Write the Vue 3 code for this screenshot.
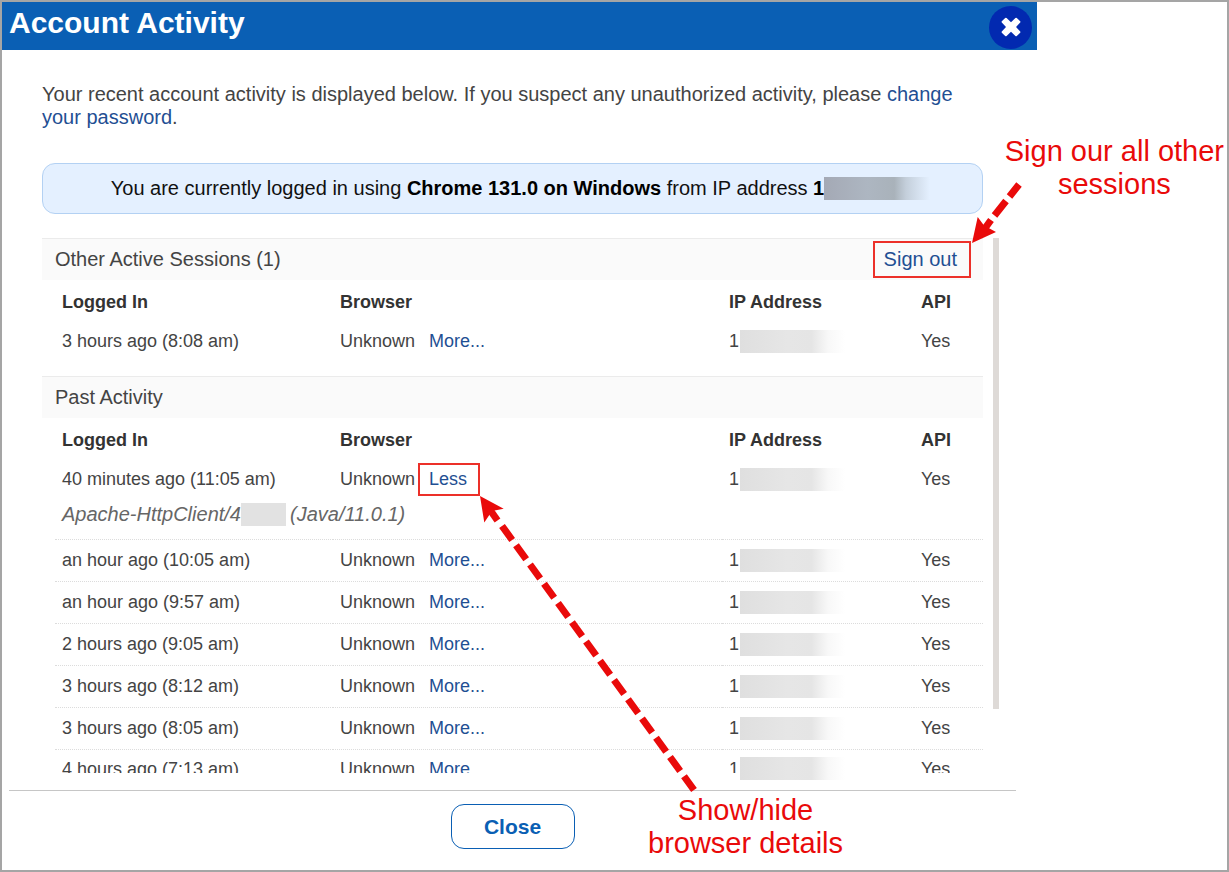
<script setup>
import { ref } from 'vue'

const active = ref([{ when: '3 hours ago (8:08 am)', open: false }])

const past = ref([
  { when: '40 minutes ago (11:05 am)', open: true },
  { when: 'an hour ago (10:05 am)', open: false },
  { when: 'an hour ago (9:57 am)', open: false },
  { when: '2 hours ago (9:05 am)', open: false },
  { when: '3 hours ago (8:12 am)', open: false },
  { when: '3 hours ago (8:05 am)', open: false },
  { when: '4 hours ago (7:13 am)', open: false, cut: true }
])
</script>

<template>
  <div class="frame">
    <main class="dialog">
      <header class="titlebar">
        <h1>Account Activity</h1>
        <button class="dismiss" type="button" aria-label="Close dialog">
          <svg viewBox="0 0 43 43" aria-hidden="true">
            <circle cx="21.5" cy="21.5" r="21.5" fill="#0229b0" />
            <path
              d="M12.8 15.3L16.2 12Q16.9 11.5 17.6 12L22 16.2L26.4 12Q27.1 11.5 27.8 12L31.2 15.3Q31.7 15.9 31.2 16.6L27 21L31.2 25.4Q31.7 26.1 31.2 26.7L27.8 30Q27.1 30.5 26.4 30L22 25.8L17.6 30Q16.9 30.5 16.2 30L12.8 26.7Q12.3 26.1 12.8 25.4L17 21L12.8 16.6Q12.3 15.9 12.8 15.3Z"
              fill="#fff"
            />
          </svg>
        </button>
      </header>

      <div class="body">
        <p class="intro">
          Your recent account activity is displayed below. If you suspect any unauthorized activity, please
          <a href="#">change your password</a>.
        </p>
        <div class="current">
          <span>You are currently logged in using <b>Chrome 131.0 on Windows</b> from IP address <b>1</b></span>
          <i class="mask mask-blue"></i>
        </div>

        <div class="scroller">
          <div class="lists">
            <section>
              <div class="section-head">
                <h2>Other Active Sessions (1)</h2>
                <button class="signout" type="button">Sign out</button>
              </div>
              <table>
                <thead>
                  <tr><th class="c1">Logged In</th><th>Browser</th><th class="c3">IP Address</th><th class="c4">API</th></tr>
                </thead>
                <tbody>
                  <tr v-for="s in active" :key="s.when">
                    <td><div class="cell">{{ s.when }}</div></td>
                    <td>
                      <div class="cell">
                        <span>Unknown</span>
                        <button class="toggle" type="button">More...</button>
                      </div>
                    </td>
                    <td><div class="cell ip"><span>1</span><i class="mask"></i></div></td>
                    <td><div class="cell">Yes</div></td>
                  </tr>
                </tbody>
              </table>
            </section>

            <section>
              <div class="section-head">
                <h2>Past Activity</h2>
              </div>
              <table>
                <thead>
                  <tr><th class="c1">Logged In</th><th>Browser</th><th class="c3">IP Address</th><th class="c4">API</th></tr>
                </thead>
                <tbody v-for="s in past" :key="s.when" :class="{ cut: s.cut }">
                  <tr>
                    <td><div class="cell"><span>{{ s.when }}</span></div></td>
                    <td>
                      <div class="cell">
                        <span>Unknown</span>
                        <button class="toggle" :class="{ marked: s.open }" type="button">
                          {{ s.open ? 'Less' : 'More...' }}
                        </button>
                      </div>
                    </td>
                    <td><div class="cell ip"><span>1</span><i class="mask"></i></div></td>
                    <td><div class="cell"><span>Yes</span></div></td>
                  </tr>
                  <tr v-if="s.open">
                    <td colspan="4">
                      <div class="agent">
                        <span>Apache-HttpClient/4</span><i class="mask mask-short"></i><span>(Java/11.0.1)</span>
                      </div>
                    </td>
                  </tr>
                </tbody>
              </table>
            </section>
          </div>
          <div class="track"><div class="thumb"></div></div>
        </div>
      </div>

      <footer>
        <button class="close" type="button">Close</button>
      </footer>
    </main>

    <p class="note note-signout">Sign our all other<br />sessions</p>
    <p class="note note-details">Show/hide<br />browser details</p>
    <svg class="arrows" width="1229" height="872" viewBox="0 0 1229 872" aria-hidden="true">
      <g fill="#e90a0a" stroke="none">
        <path d="M972 243L977.7 217L984 225.5L996 232Z" />
        <path d="M480 496L503.7 508.7L492 511L484.3 522.5Z" />
      </g>
      <g fill="none" stroke="#e90a0a" stroke-width="7">
        <path d="M1019 184.5L1009.5 196.5M1006 201L994.5 215.5M991 220L983 231" />
        <path d="M488 507L497.5 520.5" />
        <path d="M502 526L694 790" stroke-dasharray="17.3 6.5" />
      </g>
    </svg>
  </div>
</template>

<style>
body {
  background: #fff;
}
</style>

<style scoped>
* {
  box-sizing: border-box;
}
.frame {
  position: relative;
  min-height: 100vh;
  border: 2px solid #a5a5a5;
  background: #fff;
  color: #444;
  font-family: "Liberation Sans", Arial, sans-serif;
  font-size: 18px;
}
.dialog {
  margin-right: 190px;
}
h1, h2, p {
  margin: 0;
  font-weight: normal;
}
button {
  padding: 0;
  border: 0;
  background: none;
  font: inherit;
  color: #1f4f93;
  cursor: pointer;
}
a {
  color: #1f4f93;
  text-decoration: none;
}
.titlebar {
  display: flex;
  justify-content: space-between;
  height: 48px;
  padding: 0 5px 0 7px;
  background: #0a5fb4;
}
h1 {
  color: #fff;
  font-size: 30px;
  font-weight: bold;
  line-height: 42px;
}
.dismiss {
  width: 43px;
  height: 43px;
  margin-top: 4px;
}
.dismiss svg {
  display: block;
}
.body {
  padding: 33px 38px 0 40px;
}
.intro,
.current {
  margin-right: 16px;
}
.intro {
  font-size: 20px;
  line-height: 23px;
}
.current {
  display: flex;
  align-items: center;
  justify-content: center;
  height: 51px;
  margin-top: 34px;
  padding-left: 18px;
  border: 1px solid #b3d1f3;
  border-radius: 13px;
  background: #e4f0ff;
  color: #111;
  font-size: 20px;
}
.current b {
  color: #000;
}
.mask {
  flex: none;
  width: 105px;
  height: 23px;
  background: linear-gradient(90deg, #dfdfdf 0%, #e6e6e6 45%, #e5e5e5 68%, #f8f8f8 84%, #fff 100%);
}
.mask-blue {
  width: 108px;
  background: linear-gradient(90deg, #a4a9b5 0%, #adb6c1 40%, #a9b2ba 65%, #c4cfdb 76%, #e4f0ff 98%);
}
.mask-short {
  width: 45px;
  margin-right: 4px;
  background: #e2e2e2;
}
.scroller {
  display: flex;
  gap: 10px;
  height: 535px;
  margin-top: 24px;
}
.lists {
  flex: 1;
}
.track {
  width: 6px;
}
.thumb {
  height: 88%;
  background: #dedad7;
}
.section-head {
  display: flex;
  align-items: center;
  justify-content: space-between;
  height: 42px;
  padding: 0 12px 0 13px;
  border-top: 1px solid #ebebeb;
  background: #fafafa;
}
h2 {
  font-size: 20px;
}
.signout {
  height: 37px;
  padding: 0 12px 0 9px;
  border: 2px solid #ec3029;
  font-size: 20px;
}
section + section {
  margin-top: 18px;
}
table {
  width: calc(100% - 13px);
  margin-left: 13px;
  border-spacing: 0;
  table-layout: fixed;
}
th {
  height: 44px;
  padding: 0 0 0 7px;
  color: #333;
  text-align: left;
}
.c1 {
  width: 278px;
}
.c3 {
  width: 192px;
}
.c4 {
  width: 69px;
}
td {
  padding: 0 0 0 7px;
}
.cell {
  display: flex;
  align-items: center;
  gap: 14px;
  height: 34px;
}
.ip {
  gap: 1px;
}
tbody + tbody td {
  border-top: 1px dotted #dcdcdc;
}
tbody + tbody .cell {
  height: 41px;
}
.cut .cell {
  align-items: flex-start;
}
.cut span,
.cut .toggle {
  height: 23px;
  overflow: hidden;
  line-height: 38px;
}
.cut .mask {
  margin-top: 7px;
}
.toggle {
  position: relative;
}
.marked::after {
  content: "";
  position: absolute;
  inset: -6px -13px -6px -11px;
  border: 2px solid #ec3029;
}
.agent {
  display: flex;
  align-items: center;
  height: 43px;
  padding-bottom: 7px;
  color: #666;
  font-size: 20px;
  font-style: italic;
}
footer {
  display: flex;
  justify-content: center;
  margin: 17px 21px 0 7px;
  padding-top: 13px;
  border-top: 1px solid #c6c6c6;
}
.close {
  width: 124px;
  height: 45px;
  border: 1px solid #0a5fb4;
  border-radius: 13px;
  color: #0a5fb4;
  font-size: 21px;
  font-weight: bold;
}
.note {
  position: absolute;
  color: #e90a0a;
  font-size: 29px;
  line-height: 33px;
  text-align: center;
  white-space: nowrap;
}
.note-signout {
  top: 133px;
  right: 3px;
}
.note-details {
  top: 792px;
  left: 646px;
}
.arrows {
  position: absolute;
  top: -2px;
  left: -2px;
  pointer-events: none;
}
</style>
